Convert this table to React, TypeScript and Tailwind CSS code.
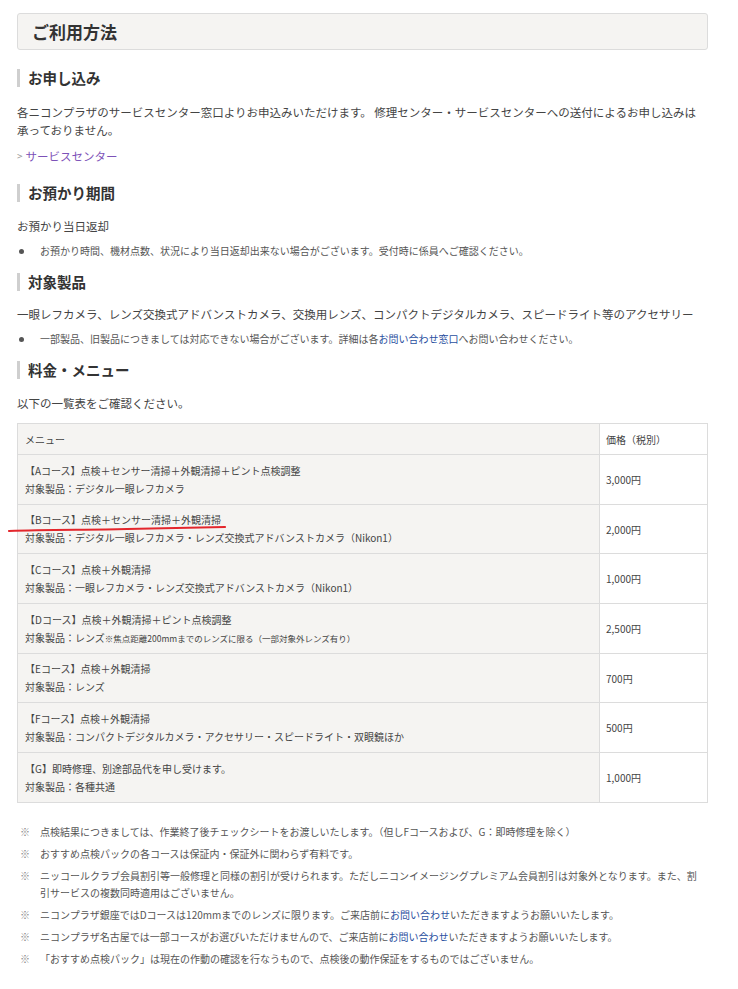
import React from "react";

const FONT = { fontFamily: '"Noto Sans CJK JP", "Noto Sans", sans-serif' };

function Heading({ children, className = "" }: { children: React.ReactNode; className?: string }) {
  return (
    <div className={`flex items-center h-[18px] border-l-[3px] border-[#cfcfcf] pl-[8px] ${className}`}>
      <span className="text-[14.5px] font-bold leading-[18px] text-[#333]">{children}</span>
    </div>
  );
}

function Bullet({ children, className = "" }: { children: React.ReactNode; className?: string }) {
  return (
    <div className={`flex items-center h-[18px] ${className}`}>
      <span className="ml-[2px] w-[5px] h-[5px] rounded-full bg-[#555] shrink-0" />
      <span className="ml-[16px] text-[10px] leading-[18px] text-[#555]">{children}</span>
    </div>
  );
}

type Row = { title: string; target: React.ReactNode; price: string; h: string; mark?: boolean };

const rows: Row[] = [
  { title: "【Aコース】点検＋センサー清掃＋外観清掃＋ピント点検調整", target: "対象製品：デジタル一眼レフカメラ", price: "3,000円", h: "h-[50px]" },
  { title: "【Bコース】点検＋センサー清掃＋外観清掃", target: "対象製品：デジタル一眼レフカメラ・レンズ交換式アドバンストカメラ（Nikon1）", price: "2,000円", h: "h-[49px]", mark: true },
  { title: "【Cコース】点検＋外観清掃", target: "対象製品：一眼レフカメラ・レンズ交換式アドバンストカメラ（Nikon1）", price: "1,000円", h: "h-[50px]" },
  {
    title: "【Dコース】点検＋外観清掃＋ピント点検調整",
    target: (
      <>
        対象製品：レンズ<span className="text-[8.5px]">※焦点距離200mmまでのレンズに限る（一部対象外レンズ有り）</span>
      </>
    ),
    price: "2,500円",
    h: "h-[50px]",
  },
  { title: "【Eコース】点検＋外観清掃", target: "対象製品：レンズ", price: "700円", h: "h-[49px]" },
  { title: "【Fコース】点検＋外観清掃", target: "対象製品：コンパクトデジタルカメラ・アクセサリー・スピードライト・双眼鏡ほか", price: "500円", h: "h-[50px]" },
  { title: "【G】即時修理、別途部品代を申し受けます。", target: "対象製品：各種共通", price: "1,000円", h: "h-[49px]" },
];

function Note({ children }: { children: React.ReactNode }) {
  return (
    <div className="flex text-[10px] leading-[17px] text-[#555]">
      <span className="w-[23px] pl-[3px] shrink-0 text-[#888]">※</span>
      <span>{children}</span>
    </div>
  );
}

export default function App() {
  return (
    <div className="bg-white min-h-[989px] w-[738px]" style={FONT}>
      <div className="ml-[17px] w-[691px] pt-[13px] pb-[20px] text-[#333]">
        <div className="h-[37px] border border-[#dcdcdc] bg-[#f5f4f2] rounded-[3px] flex items-center pl-[14px]">
          <span className="text-[17px] font-bold text-[#333]">ご利用方法</span>
        </div>

        <Heading className="mt-[19px]">お申し込み</Heading>
        <p className="mt-[16px] text-[11.5px] leading-[18px] text-[#444]">
          各ニコンプラザのサービスセンター窓口よりお申込みいただけます。 修理センター・サービスセンターへの送付によるお申し込みは
          <br />
          承っておりません。
        </p>
        <div className="mt-[8px] h-[18px] flex items-center text-[11.5px] leading-[18px]">
          <span className="text-[#999] text-[10px] mr-[3px]">&gt;</span>
          <span className="text-[#7d52b8]">サービスセンター</span>
        </div>

        <Heading className="mt-[19px]">お預かり期間</Heading>
        <p className="mt-[15px] text-[11.5px] leading-[18px] text-[#444]">お預かり当日返却</p>
        <Bullet className="mt-[7px]">お預かり時間、機材点数、状況により当日返却出来ない場合がございます。受付時に係員へご確認ください。</Bullet>

        <Heading className="mt-[13px]">対象製品</Heading>
        <p className="mt-[14px] text-[11.5px] leading-[18px] text-[#444] whitespace-nowrap">
          一眼レフカメラ、レンズ交換式アドバンストカメラ、交換用レンズ、コンパクトデジタルカメラ、スピードライト等のアクセサリー
        </p>
        <Bullet className="mt-[7px]">
          一部製品、旧製品につきましては対応できない場合がございます。詳細は各<span className="text-[#2a4fa0]">お問い合わせ窓口</span>へお問い合わせください。
        </Bullet>

        <Heading className="mt-[13px]">料金・メニュー</Heading>
        <p className="mt-[15px] text-[11.5px] leading-[18px] text-[#444]">以下の一覧表をご確認ください。</p>

        <div className="mt-[11px] border border-[#dcdcdc] text-[10px] text-[#444]">
          <div className="flex h-[31px] border-b border-[#dcdcdc]">
            <div className="w-[582px] bg-[#f5f4f2] border-r border-[#dcdcdc] flex items-center pl-[7px]">メニュー</div>
            <div className="flex-1 bg-white flex items-center pl-[6px]">価格（税別）</div>
          </div>
          {rows.map((r, i) => (
            <div
              key={i}
              className={`flex ${r.h} ${i < rows.length - 1 ? "border-b" : ""} border-[#dcdcdc] relative`}
            >
              <div className="w-[582px] bg-[#f5f4f2] border-r border-[#dcdcdc] flex flex-col justify-center pl-[7px] leading-[18px]">
                <div>{r.title}</div>
                <div>{r.target}</div>
              </div>
              <div className="flex-1 bg-white flex items-center pl-[6px]">{r.price}</div>
              {r.mark && (
                <svg className="absolute left-[-11px] top-[18px]" width="222" height="12" viewBox="0 0 222 12">
                  <path
                    d="M2 8 C 40 6.5, 80 7, 120 6 S 190 4.5, 218 4"
                    fill="none"
                    stroke="#e3262c"
                    strokeWidth="2.2"
                    strokeLinecap="round"
                  />
                </svg>
              )}
            </div>
          ))}
        </div>

        <div className="mt-[20px] flex flex-col gap-[5px]">
          <Note>点検結果につきましては、作業終了後チェックシートをお渡しいたします。（但しFコースおよび、G：即時修理を除く）</Note>
          <Note>おすすめ点検パックの各コースは保証内・保証外に関わらず有料です。</Note>
          <Note>
            ニッコールクラブ会員割引等一般修理と同様の割引が受けられます。ただしニコンイメージングプレミアム会員割引は対象外となります。また、割
            <br />
            引サービスの複数同時適用はございません。
          </Note>
          <Note>
            ニコンプラザ銀座ではDコースは120mmまでのレンズに限ります。ご来店前に<span className="text-[#2a4fa0]">お問い合わせ</span>いただきますようお願いいたします。
          </Note>
          <Note>
            ニコンプラザ名古屋では一部コースがお選びいただけませんので、ご来店前に<span className="text-[#2a4fa0]">お問い合わせ</span>いただきますようお願いいたします。
          </Note>
          <Note>「おすすめ点検パック」は現在の作動の確認を行なうもので、点検後の動作保証をするものではございません。</Note>
        </div>
      </div>
    </div>
  );
}
